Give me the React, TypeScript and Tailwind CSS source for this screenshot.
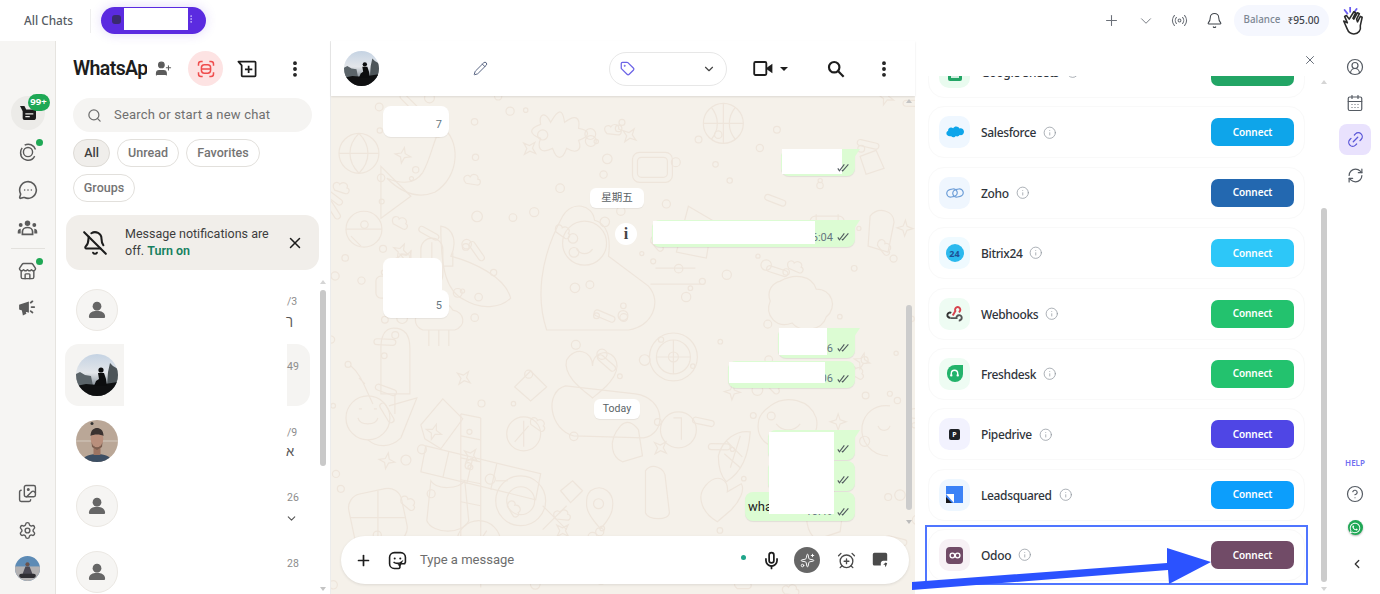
import React from "react";
import { Plus, ChevronDown, ChevronLeft, Radio, Bell, BellOff, X, Search, EllipsisVertical, Pencil, Tag, Mic, CircleUserRound, CalendarDays, Link2, RefreshCw, CircleHelp, Info, Settings, Images, Store, MessageCircleMore, UserPlus, Sparkles, AlarmClockPlus } from "lucide-react";
import { FaWhatsapp } from "react-icons/fa";

const Person = () => (
  <svg viewBox="0 0 42 42" className="w-[42px] h-[42px] rounded-full border border-[#ebe8e3] bg-[#f6f5f3] shrink-0">
    <circle cx="21" cy="17" r="4.6" fill="#666" />
    <path d="M12.5 28c0-4 4-6.2 8.5-6.2s8.500 2.200 8.500 6.200c0 1-.7 1.500-1.600 1.500H14.100c-.9 0-1.600-.5-1.600-1.500z" fill="#666" />
  </svg>
);

const Lake = ({ s, id }: { s: string; id: string }) => (
  <svg viewBox="0 0 42 42" className={s + " rounded-full shrink-0"}>
    <defs>
      <linearGradient id={id} x1="0" x2="0" y1="0" y2="1">
        <stop offset="0" stopColor="#c5d3e3" />
        <stop offset="0.45" stopColor="#e3e6ea" />
        <stop offset="0.7" stopColor="#9aa3aa" />
        <stop offset="1" stopColor="#6b7278" />
      </linearGradient>
    </defs>
    <rect width="42" height="42" fill={`url(#${id})`} />
    <path d="M0 20l4-2 5 3 6 1 2 10H0z" fill="#5b6469" />
    <path d="M34 9l3 3 5 3v17h-11l1-14z" fill="#4d5559" />
    <path d="M0 32l10-2 12 1 20-3v14H0z" fill="#0f1011" />
    <circle cx="25" cy="16" r="2.600" fill="#0c0d0e" />
    <path d="M22 19h6l2 6 1 7H18l2-5 3-2z" fill="#0c0d0e" />
  </svg>
);

const Man = () => (
  <svg viewBox="0 0 42 42" className="w-[42px] h-[42px] rounded-full shrink-0">
    <rect width="42" height="42" fill="#baa797" />
    <path d="M0 21h42" stroke="#dcd3ca" strokeWidth="0.800" />
    <path d="M6 42c1-6 8-8 15-8s14 2 15 8z" fill="#3d4f64" />
    <rect x="17.500" y="26" width="7" height="9" fill="#9c7462" />
    <ellipse cx="21" cy="19" rx="6.300" ry="8.500" fill="#b98f7c" />
    <path d="M14.500 16c0-6 3.500-8 6.500-8s6.500 2 6.500 8c-3-2-10-2-13 0z" fill="#3a3230" />
    <path d="M15.500 22c1.500 7 9.500 7 11 0l-.5 5-5 3-5-3z" fill="#7d5f50" />
    <circle cx="16" cy="3.500" r="1.500" fill="#333" />
  </svg>
);

const Rider = () => (
  <svg viewBox="0 0 24 24" className="w-[25px] h-[25px] rounded-full">
    <rect width="24" height="24" fill="#5d8bb5" />
    <rect y="10" width="24" height="14" fill="#b3b1b2" />
    <path d="M7 18l3-8h4l3 8z" fill="#4a4853" />
    <circle cx="12" cy="8" r="2" fill="#6b534c" />
    <rect x="4" y="17" width="16" height="4" rx="2" fill="#2f2e33" />
  </svg>
);

const Checks = () => (
  <svg viewBox="0 0 16 11" className="w-[13px] h-[10px]" fill="none" stroke="#525c60" strokeWidth="1.400">
    <path d="M1 6l2 3 6-8M6 8l1 1 7-8" />
  </svg>
);

const Doodles = () => {
  const dots: React.ReactNode[] = [];
  let seed = 7;
  const rnd = () => {
    seed = (seed * 9301 + 49297) % 233280;
    return seed / 233280;
  };
  for (let i = 0; i < 150; i++) {
    dots.push(<circle key={i} cx={rnd() * 590} cy={rnd() * 500} r={2 + rnd() * 3.5} />);
  }
  const stars: React.ReactNode[] = [];
  for (let i = 0; i < 60; i++) {
    const x = rnd() * 585;
    const y = rnd() * 498;
    const kind = i % 3;
    stars.push(
      <path
        key={i}
        transform={`translate(${x.toFixed(0)} ${y.toFixed(0)}) rotate(${(rnd() * 60).toFixed(0)})`}
        d={kind === 0 ? "M0-8L2-2 8 0 2 2 0 8-2 2-8 0-2-2z" : kind === 1 ? "M-8 3c-3-5 3-8 5-5 2-5 9-3 8 1 4 0 4 6 0 6H-6z" : "M-8-3h16a3 3 0 0 1 0 6H-8a3 3 0 0 1 0-6z"}
      />
    );
  }
  return (
    <svg className="absolute inset-0 w-full h-full" viewBox="0 0 585 498" fill="none" stroke="#eee5db" strokeWidth="1.200">
      {dots}
      {stars}
      <g>
        <circle cx="28" cy="57" r="20" /><path d="M8 57h40M28 37c-12 12-12 28 0 40M28 37c12 12 12 28 0 40" />
        <path d="M220 26c8-14 12-14 14 0 10-8 16-6 14 6 12 2 12 8 0 12 4 10-2 14-12 8-4 12-10 12-14 0-12 6-16 0-12-10-12-4-12-10 0-14-2-10 4-14 10-2z" />
        <circle cx="393" cy="27" r="20" /><path d="M393 7v40M373 27h40M381 11c8 10 8 22 0 32M405 11c-8 10-8 22 0 32" />
        <path d="M110 30c20 12 20 50-6 66-20 8-36-2-48-14 14 6 28 6 36-6 8-14 10-30 18-46z" />
        <rect x="302" y="56" width="40" height="30" rx="7" /><rect x="307" y="61" width="30" height="20" rx="4" />
        <path d="M50 70l30 30-30 22z" />
        <path d="M232 120c10-16 30-12 32 4 14 4 16 20 14 36l40 30c14 16 4 40-20 44H216c-10-30-8-70 16-114z" />
        <circle cx="254" cy="147" r="22" /><path d="M246 153c4 6 12 6 16 0" />
        <path d="M110 130c14 2 16 18 10 30 22 6 54 20 60 42-10 10-30 12-46 2-18-8-24-30-24-74z" />
        <rect x="90" y="142" width="22" height="48" rx="11" /><path d="M101 146v40M90 166H80v-12M112 170h10v-14" />
        <circle cx="33" cy="133" r="18" /><path d="M15 133h36" />
        <path d="M358 110l24 14 -6 38 -30-6z" /><circle cx="370" cy="135" r="9" />
        <path d="M325 172h40M320 188h50" />
        <rect x="45" y="180" width="40" height="22" rx="5" />
        <path d="M92 214c10-14 24-10 30 0 12 2 14 16 2 20H92c-10-4-10-16 0-20z" /><path d="M98 234v16M108 234v16M118 234v16" />
        <path d="M450 185c14-8 32-6 36 8 16 0 22 18 10 28-4 14-26 16-34 6-16 6-28-8-22-22-4-10 2-18 10-20z" />
        <rect x="480" y="120" width="34" height="26" rx="5" /><path d="M486 118v6M508 118v6" />
      </g>
      <g>
        <path d="M63 232c14 0 16 12 16 20v46H50v-46c0-8 2-20 13-20zM64 298v20" />
        <path d="M28 282l6 6M20 270c10 8 14 22 22 38" />
        <path d="M200 275l16 16-16 14-16-14z" />
        <path d="M236 264c8-14 26-10 26 6 0-16 20-18 24-4 4 14-14 28-24 36-10-8-30-22-26-38z" />
        <path d="M235 290l70 8c30 4 32 40 8 44l-70-2c-24-6-30-44-8-50z" />
        <circle cx="343" cy="261" r="24" /><circle cx="343" cy="261" r="17" /><circle cx="343" cy="261" r="5" /><path d="M343 244v34M326 261h34" />
        <circle cx="37" cy="322" r="22" /><path d="M27 322c2 8 18 8 20 0M28 313h3M43 313h3" /><path d="M58 310l28-8-16 40c-10 10-24 10-33 2" />
        <path d="M130 318v170M150 322v170" /><path d="M130 318l20 4M130 340l20 4M130 362l20 4M130 384l20 4M130 406l20 4" />
        <path d="M95 350l115 28-5 26-115-28zM118 356l-6 26M142 362l-6 26M166 368l-6 26" />
        <path d="M112 303l20 20-22 30-16-10-4-14z" />
        <circle cx="193" cy="338" r="17" /><path d="M193 325v26M184 346l14-16" />
        <path d="M290 330c6-6 12-4 18 4l4 26-20 6c-10-4-16-20-2-36z" />
        <circle cx="348" cy="334" r="18" /><path d="M343 322h8v22" />
        <path d="M388 360c4-16 18-26 32-24-2 24-8 40-24 50-6-6-8-14-8-26z" /><path d="M396 345l16 16M394 358l16 14M410 340l-10 32" />
        <path d="M440 310c16-12 40-6 46 12 4 16-10 32-28 32s-32-10-30-26c0-8 6-14 12-18z" /><path d="M446 328c6 8 18 8 24 0" />
        <path d="M560 310c-16-2-26 8-28 20-2 16 10 30 26 30" /><path d="M548 330c2 6 10 6 12 0" />
        <rect x="20" y="395" width="54" height="54" rx="14" transform="rotate(-12 47 422)" /><path d="M47 395v54M20 422h54" />
        <path d="M100 385c6 10 28 8 34 0l4 40c-6 14-36 14-42 0z" />
        <circle cx="190" cy="405" r="25" /><circle cx="190" cy="405" r="14" /><path d="M165 385h12" />
        <circle cx="148" cy="447" r="22" /><path d="M148 447l8-12" />
        <path d="M260 395c12-8 24 2 22 16 0 10-12 22-12 22s-14-14-14-24c0-6 0-10 4-14z" /><circle cx="268" cy="408" r="5" />
        <path d="M315 375c6-8 20-4 20 8l4 34c0 8-22 8-24 0z" />
        <path d="M375 390c12-14 24-6 22 6l14-8c4 6-2 18-10 26l-14 12c-14-8-22-24-12-36z" />
        <path d="M230 395l12-10 10 10-12 12zM212 410l24 24M236 410l-24 24" />
        <path d="M480 410l24-14 10 10-4 30-24 8c-10-8-12-24-6-34z" />
        <path d="M20 140l10 10M530 60l16-6 8 18-18 6zM540 120c8-10 24-6 24 6l-6 30-20-6z" />
      </g>
    </svg>
  );
};

function Bubble({ mt, w, h, tail, children }: { mt: number; w: number; h: number; tail?: boolean; children?: React.ReactNode }) {
  return (
    <div style={{ marginTop: mt, width: w, height: h }} className={"relative self-end bg-[#dcfcd3] shadow-[0_1px_1px_rgba(0,0,0,0.08)] " + (tail ? "rounded-b-lg rounded-tl-lg" : "rounded-lg")}>
      {tail && <div className="absolute -right-[5px] top-0 w-0 h-0 border-t-[9px] border-t-[#dcfcd3] border-r-[6px] border-r-transparent" />}
      {children}
    </div>
  );
}

const Time = ({ t }: { t: string }) => (
  <div className="absolute right-[5px] bottom-[4px] flex items-center gap-[4px] text-[11px] leading-none text-[#667781]">
    {t}
    <Checks />
  </div>
);

const Chip = ({ t, mt, w }: { t: string; mt: number; w: number }) => (
  <div style={{ marginTop: mt, width: w }} className="self-center h-[20px] -translate-x-[2px] rounded-md bg-white flex items-center justify-center text-[10.500px] text-[#5a6266] shadow-[0_1px_1px_rgba(0,0,0,0.06)] [font-family:Roboto,'Noto_Sans_CJK_SC',sans-serif]">
    {t}
  </div>
);

const rows = [
  { av: <Person />, t: "/3", sub: "ך" },
  { av: <Lake id="sky1" s="w-[42px] h-[42px]" />, t: "49", sub: "", sel: true },
  { av: <Man />, t: "/9", sub: "א" },
  { av: <Person />, t: "26", sub: "", chev: true },
  { av: <Person />, t: "28", sub: "" },
];

const Logo = ({ name }: { name: string }) => {
  if (name === "Google Sheets")
    return <div className="w-[14px] h-[18px] rounded-[2px] bg-[#23a566] flex items-end justify-center pb-[3px]"><div className="w-[8px] h-[6px] bg-white/80" /></div>;
  if (name === "Salesforce")
    return (
      <svg viewBox="0 0 24 16" className="w-[18px] h-[12px]"><path d="M9.500 3c1-1.500 2.500-2.300 4-2.300 2 0 3.500 1 4.300 2.500 3.600-1 6.200 1.700 6.200 4.500s-2.600 5.400-5.800 4.400c-1 1.700-3.500 2.300-5.200 1.200-1.200 2-4.500 2.300-6 .2C3 14.200.5 12.400.5 9.800c0-1.800 1-3 2.300-3.600C2.300 3 6.500.5 9.500 3z" fill="#0ea5ea" /></svg>
    );
  if (name === "Zoho")
    return (
      <svg viewBox="0 0 24 16" className="w-[18px] h-[12px]" fill="none" stroke="#6f9fd8" strokeWidth="1.600"><rect x="1" y="3" width="14" height="10" rx="5" transform="rotate(-12 8 8)" /><rect x="9" y="3" width="14" height="10" rx="5" transform="rotate(-12 16 8)" /></svg>
    );
  if (name === "Bitrix24")
    return <div className="w-[18px] h-[18px] rounded-full bg-[#2bb9ee] flex items-center justify-center text-[9px] font-bold text-[#1d4f95] leading-none">24</div>;
  if (name === "Webhooks")
    return (
      <svg viewBox="0 0 24 24" className="w-[18px] h-[18px]" fill="none" strokeWidth="2.600"><path d="M9 14l3.500-6a3.500 3.500 0 1 1 4.500 1.500" stroke="#d8434e" /><path d="M6 17a3.500 3.500 0 1 1 1-6.500" stroke="#333" /><path d="M6 17.500h8a3.500 3.500 0 1 1 3 3" stroke="#555" /></svg>
    );
  if (name === "Freshdesk")
    return (
      <div className="w-[16px] h-[17px] rounded-full rounded-tr-[3px] bg-[#23b36b] flex items-center justify-center">
        <svg viewBox="0 0 12 12" className="w-[11px] h-[11px]" fill="none" stroke="#fff" strokeWidth="1.500"><path d="M2.500 9V6a3.500 3.500 0 0 1 7 0v3" /><path d="M2.500 7v2M9.500 7v2" strokeWidth="2.400" /></svg>
      </div>
    );
  if (name === "Pipedrive")
    return <div className="w-[11px] h-[11px] rounded-[2px] bg-[#1f2227] flex items-center justify-center text-[7px] font-bold text-white leading-none">P</div>;
  if (name === "Leadsquared")
    return (
      <svg viewBox="0 0 17 17" className="w-[17px] h-[17px]"><rect width="17" height="17" fill="#3b82f6" /><path d="M0 8h8v9z" fill="#fff" /><path d="M0 11l6 6H0z" fill="#1a1a1a" /></svg>
    );
  return (
    <div className="w-[17px] h-[17px] rounded-[4px] bg-[#714b67] flex items-center justify-center">
      <svg viewBox="0 0 14 8" className="w-[12px] h-[7px]" fill="none" stroke="#fff" strokeWidth="1.600"><circle cx="4" cy="4" r="2.700" /><circle cx="10" cy="4" r="2.700" /></svg>
    </div>
  );
};

const integrations = [
  { name: "Google Sheets", c: "bg-[#22a565]", i: "bg-[#e9fbef]" },
  { name: "Salesforce", c: "bg-[#0ea5ea]", i: "bg-[#eff7ff]" },
  { name: "Zoho", c: "bg-[#2368b0]", i: "bg-[#eff6fe]" },
  { name: "Bitrix24", c: "bg-[#2dc7f8]", i: "bg-[#effaff]" },
  { name: "Webhooks", c: "bg-[#23c26e]", i: "bg-[#eefcf3]" },
  { name: "Freshdesk", c: "bg-[#23c26e]", i: "bg-[#eefcf3]" },
  { name: "Pipedrive", c: "bg-[#4f46e5]", i: "bg-[#f2f2fe]" },
  { name: "Leadsquared", c: "bg-[#0c9efc]", i: "bg-[#eef7ff]" },
  { name: "Odoo", c: "bg-[#714b67]", i: "bg-[#f7f1f5]" },
];

export default function App() {
  return (
    <div className="relative w-[1380px] h-[594px] overflow-hidden bg-white flex flex-col [font-family:'Noto_Sans',sans-serif]">
      <header className="h-[41px] shrink-0 flex items-center pl-[24px] pr-[16px]">
        <span className="w-[52px] text-[11.800px] font-medium text-[#555b63]">All Chats</span>
        <div className="w-px h-[24px] bg-[#eeeeee] ml-[14px]" />
        <div className="relative ml-[10px] w-[105px] h-[27px] rounded-full bg-[#5b2be0] shadow-[0_0_12px_rgba(91,43,224,0.18)]">
          <div className="absolute left-[11px] top-[8px] w-[9px] h-[9px] rounded-[3px] bg-[#3a2a70]" />
          <div className="absolute left-[23px] top-[1px] w-[64px] h-[22px] bg-white" />
          <EllipsisVertical className="absolute right-[10px] top-[7px] w-[10px] h-[10px] text-[#c9b8ff]" />
        </div>
        <div className="ml-auto flex items-center">
          <Plus className="w-[17px] h-[17px] text-[#6b7078]" strokeWidth={1.500} />
          <ChevronDown className="ml-[17px] w-[18px] h-[18px] text-[#6b7078]" strokeWidth={1.200} />
          <Radio className="ml-[16px] w-[17px] h-[17px] text-[#6b7078]" strokeWidth={1.500} />
          <Bell className="ml-[18px] w-[17px] h-[17px] text-[#3f444b]" strokeWidth={1.500} />
          <div className="ml-[11px] w-[95px] h-[31px] rounded-full bg-[#f5f7fe] flex items-center justify-center gap-[7px]">
            <span className="text-[9.800px] font-medium text-[#7d8794]">Balance</span>
            <span className="text-[10.200px] font-medium text-[#3f444b]">₹95.00</span>
          </div>
          <svg viewBox="0 0 26 30" className="ml-[11px] w-[24px] h-[28px]" fill="none" strokeLinecap="round" strokeLinejoin="round">
            <path d="M5 3l3 4M11 0v5M18 2l-3 4" stroke="#6a5cf0" strokeWidth="1.900" />
            <path d="M4 15l4 9c1 3 3 5 7 5 5 0 8-4 7-9l2-9-2-1-3 6-1-3 3-6-2-1-4 7-1-1 3-6-2-1-5 8-3-4-2 1 3 7z" fill="#fff" stroke="#2a2a2a" strokeWidth="1.700" />
          </svg>
        </div>
      </header>

      <main className="flex-1 min-h-0 flex">
        <nav className="w-[56px] shrink-0 bg-[#f6f5f3] border-r border-[#e6e4e0] flex flex-col items-center text-[#5b5b5b]">
          <div className="relative mt-[55px] w-[34px] h-[34px] rounded-full bg-[#ecebe8] flex items-center justify-center">
            <svg viewBox="0 0 20 18" className="w-[18px] h-[16px]" fill="#1c1c1c"><path d="M1 1h5l2 4h11v9a3 3 0 0 1-3 3H6a2 2 0 0 1-2-2V7z" /><path d="M7 10h9M7 13h5" stroke="#ecebe8" strokeWidth="1.500" /></svg>
            <span className="absolute -top-[2px] left-[17px] w-[22px] h-[17px] rounded-full bg-[#1fa855] text-white text-[9.500px] font-bold flex items-center justify-center">99+</span>
          </div>
          <div className="relative mt-[10px] w-[24px] h-[24px] flex items-center justify-center">
            <svg viewBox="0 0 24 24" className="w-[20px] h-[20px]" fill="none" stroke="#5b5b5b" strokeWidth="1.700"><circle cx="12" cy="12" r="5.500" /><path d="M5 7a9 9 0 0 0-1 9M8 3.800A9 9 0 0 1 21 9M3 13a9 9 0 0 0 17 4" /></svg>
            <span className="absolute -right-[3px] top-[-1px] w-[7px] h-[7px] rounded-full bg-[#1fa855]" />
          </div>
          <MessageCircleMore className="mt-[16px] w-[20px] h-[20px]" strokeWidth={1.900} />
          <svg viewBox="0 0 24 20" className="mt-[19px] w-[21px] h-[17px]" fill="#5b5b5b"><circle cx="12" cy="5" r="3.200" /><circle cx="4" cy="7" r="2.300" /><circle cx="20" cy="7" r="2.300" /><path d="M6 18v-3c0-3 3-5 6-5s6 2 6 5v3z" fill="none" stroke="#5b5b5b" strokeWidth="2" /><path d="M0.500 17v-2c0-2 1.500-3.500 3.500-3.500v5.500zM23.500 17v-2c0-2-1.500-3.500-3.500-3.500v5.500z" /></svg>
          <div className="mt-[12px] w-[34px] h-px bg-[#e3e1dd]" />
          <div className="relative mt-[12px] w-[24px] h-[20px] flex items-center justify-center">
            <Store className="w-[19px] h-[19px]" strokeWidth={1.800} />
            <span className="absolute -right-[3px] -top-[3px] w-[7px] h-[7px] rounded-full bg-[#1fa855]" />
          </div>
          <svg viewBox="0 0 22 18" className="mt-[19px] w-[20px] h-[16px]" fill="none" stroke="#5b5b5b" strokeWidth="2"><path d="M2 6l9-3v10l-9-3zM5 11l1 5 2-1-1-3" fill="#5b5b5b" /><path d="M14 3l2-1.500M15 8h3M14 12.500l2 1.500" strokeLinecap="round" /></svg>
          <Images className="mt-auto w-[19px] h-[19px]" strokeWidth={1.800} />
          <Settings className="mt-[18px] w-[19px] h-[19px]" strokeWidth={1.800} />
          <div className="mt-[16px] mb-[13.500px] h-[25px]"><Rider /></div>
        </nav>

        <section className="relative w-[274px] shrink-0 overflow-hidden [font-family:Roboto,sans-serif]">
          <div className="mt-[10px] h-[35px] pl-[17px] flex items-center">
            <span className="w-[74px] overflow-hidden whitespace-nowrap text-[19.500px] font-semibold tracking-[-0.600px] text-[#1d1d1d]">WhatsApp</span>
            <UserPlus className="ml-[8px] w-[17px] h-[17px] text-[#5b5b5b] fill-[#5b5b5b]" strokeWidth={1.500} />
            <div className="ml-[16px] w-[35px] h-[35px] rounded-full bg-[#fde3e3] flex items-center justify-center">
              <svg viewBox="0 0 24 24" className="w-[20px] h-[20px]" fill="none" stroke="#ef4d4d" strokeWidth="1.800"><path d="M3 8V6a3 3 0 0 1 3-3h2M16 3h2a3 3 0 0 1 3 3v2M21 16v2a3 3 0 0 1-3 3h-2M8 21H6a3 3 0 0 1-3-3v-2" /><rect x="6.500" y="7" width="11" height="10" rx="3.500" /><path d="M6.500 12h11" /></svg>
            </div>
            <svg viewBox="0 0 24 22" className="ml-[14px] w-[20px] h-[18px]" fill="none" stroke="#1d1d1d" strokeWidth="2.100" strokeLinejoin="round"><path d="M1.500 2h20a1 1 0 0 1 1 1v16a1 1 0 0 1-1 1H6.500a1 1 0 0 1-1-1V6.500z" /><path d="M14 7v9M9.500 11.500h9" /></svg>
            <EllipsisVertical className="ml-[28px] w-[20px] h-[20px] text-[#1d1d1d]" strokeWidth={2.600} />
          </div>
          <div className="mt-[12px] ml-[17px] w-[239px] h-[34px] rounded-full bg-[#f5f4f2] flex items-center pl-[14px]">
            <Search className="w-[15px] h-[15px] text-[#6e6e6e]" />
            <span className="ml-[12px] text-[13px] text-[#6f6f6f] tracking-[0.2px]">Search or start a new chat</span>
          </div>
          <div className="mt-[7px] ml-[17px] w-[239px] flex flex-wrap gap-x-[7px] gap-y-[7px]">
            <span className="h-[28px] w-[37px] rounded-full border border-[#dedbd6] bg-[#f0eeeb] flex items-center justify-center text-[12.500px] font-medium text-[#3f3f3f]">All</span>
            <span className="h-[28px] w-[62px] rounded-full border border-[#e2e0dc] flex items-center justify-center text-[12.500px] font-medium text-[#747474]">Unread</span>
            <span className="h-[28px] w-[74px] rounded-full border border-[#e2e0dc] flex items-center justify-center text-[12.500px] font-medium text-[#747474]">Favorites</span>
            <span className="h-[28px] w-[62px] rounded-full border border-[#e2e0dc] flex items-center justify-center text-[12.500px] font-medium text-[#747474]">Groups</span>
          </div>
          <div className="mt-[13px] ml-[10px] w-[253px] h-[55px] rounded-[14px] bg-[#f1eeea] flex items-center pl-[16px]">
            <BellOff className="w-[26px] h-[26px] text-[#1d1d1d]" strokeWidth={1.900} />
            <div className="ml-[17px] w-[150px] -translate-y-[1px] text-[12.500px] leading-[17px] text-[#3d3d3d]">
              Message notifications are off. <span className="font-semibold text-[#15805f]">Turn on</span>
            </div>
            <X className="ml-[11px] w-[18px] h-[18px] text-[#1d1d1d]" strokeWidth={2} />
          </div>
          <div className="mt-[9px] ml-[9px] w-[245px] flex flex-col gap-[3.400px]">
            {rows.map((r, i) => (
              <div key={i} className={"relative h-[62px] shrink-0 rounded-[14px] flex items-center pl-[11px] " + (r.sel ? "bg-[#f5f4f2]" : "")}>
                {r.av}
                {r.sel && <div className="absolute left-[59px] top-0 w-[163px] h-full bg-white" />}
                <div className="absolute left-[222px] top-[17px] text-[10.500px] leading-[12px] text-[#8c8c8c]">{r.t}</div>
                {r.sub && <div className="absolute left-[221px] top-[35px] text-[13px] leading-[14px] text-[#555]">{r.sub}</div>}
                {r.chev && <ChevronDown className="absolute left-[220px] top-[37px] w-[13px] h-[13px] text-[#555]" strokeWidth={2} />}
              </div>
            ))}
          </div>
          <div className="absolute left-[264px] top-[249px] w-[6px] h-[176px] rounded-full bg-[#c9c9c9]" />
          <div className="absolute left-[264px] top-[239px] w-0 h-0 border-x-[3px] border-x-transparent border-b-[4px] border-b-[#d5d5d5]" />
          <div className="absolute left-[264px] bottom-[3px] w-0 h-0 border-x-[3px] border-x-transparent border-t-[4px] border-t-[#c4c4c4]" />
        </section>

        <section className="w-[585px] shrink-0 flex flex-col border-l border-[#ececec]">
          <div className="h-[55px] shrink-0 flex items-center pl-[13px] shadow-[0_1px_2px_rgba(0,0,0,0.1)] relative z-10 bg-white">
            <Lake id="sky2" s="w-[35px] h-[35px]" />
            <Pencil className="ml-[94px] w-[15px] h-[15px] text-[#4d5a7a]" strokeWidth={1.500} />
            <div className="ml-[121px] w-[118px] h-[34px] rounded-full border border-[#e7e7e7] flex items-center pl-[10px]">
              <Tag className="w-[15px] h-[15px] text-[#6b63e6]" strokeWidth={2} />
              <ChevronDown className="ml-[67px] w-[14px] h-[14px] text-[#444]" />
            </div>
            <svg viewBox="0 0 26 20" className="ml-[26px] w-[21px] h-[17px]" fill="none" stroke="#1d1d1d" strokeWidth="2.300"><rect x="1.500" y="2" width="15" height="16" rx="1.500" /><path d="M17 9l7-5v12l-7-5z" fill="#1d1d1d" stroke="none" /></svg>
            <div className="ml-[6px] w-0 h-0 border-x-[4px] border-x-transparent border-t-[4px] border-t-[#1d1d1d]" />
            <svg viewBox="0 0 20 20" className="ml-[39px] w-[18px] h-[18px]" fill="none" stroke="#1d1d1d" strokeWidth="2.400"><circle cx="8" cy="8" r="5.800" /><path d="M12.500 12.500l6 6" /></svg>
            <EllipsisVertical className="ml-[29px] w-[20px] h-[20px] text-[#1d1d1d]" strokeWidth={2.600} />
          </div>
          <div className="relative flex-1 min-h-0 overflow-hidden bg-[#f5f1ea] [font-family:Roboto,sans-serif]">
            <Doodles />
            <div className="relative flex flex-col pl-[52px] pr-[60px] pt-[10px] h-[425px]">
              <div className="relative w-[66px] h-[31px] rounded-lg bg-white shadow-[0_1px_1px_rgba(0,0,0,0.06)] text-[11px] text-[#667781]">
                <span className="absolute right-[7px] bottom-[3px]">7</span>
              </div>
              <Bubble mt={12} w={74} h={27} tail>
                <div className="absolute left-[1px] top-0 w-[60px] h-[25px] bg-white" />
                <div className="absolute right-[5px] bottom-[3px]"><Checks /></div>
              </Bubble>
              <Chip t="星期五" mt={12} w={54} />
              <Bubble mt={12} w={203} h={27} tail>
                <Time t="16:04" />
                <div className="absolute left-[1px] top-[1px] w-[162px] h-[23px] bg-white" />
                <div className="absolute -left-[37px] top-[3px] w-[22px] h-[22px] rounded-full bg-white flex items-center justify-center text-[16px] font-bold text-[#444] [font-family:'Liberation_Serif',serif]">i</div>
              </Bubble>
              <div className="mt-[11px] h-[60px] w-[66px] relative text-[11px] text-[#667781]">
                <div className="w-[59px] h-[32px] bg-white rounded-t-lg" />
                <div className="w-[66px] h-[28px] bg-white rounded-b-lg rounded-tr-lg shadow-[0_1px_1px_rgba(0,0,0,0.06)]" />
                <span className="absolute right-[7px] bottom-[3px]">5</span>
              </div>
              <Bubble mt={10} w={77} h={30} tail>
                <Time t="16:06" />
                <div className="absolute left-[1px] top-0 w-[48px] h-[27px] bg-white" />
              </Bubble>
              <Bubble mt={3} w={127} h={28}>
                <Time t="16:06" />
                <div className="absolute left-[1px] top-[1px] w-[96px] h-[21px] bg-white" />
              </Bubble>
              <Chip t="Today" mt={11} w={46} />
              <Bubble mt={11} w={87} h={30} tail><div className="absolute right-[5px] bottom-[6px]"><Checks /></div></Bubble>
              <Bubble mt={1} w={87} h={30}><div className="absolute right-[5px] bottom-[6px]"><Checks /></div></Bubble>
              <Bubble mt={1} w={110} h={29}>
                <span className="absolute left-[3px] top-[5px] text-[13px] text-[#222]">what</span>
                <Time t="10:49" />
                <div className="absolute left-[24px] -top-[60px] w-[65px] h-[82px] bg-white" />
              </Bubble>
            </div>
            <div className="relative mt-[15px] ml-[10px] w-[568px] h-[48px] rounded-[24px] bg-white shadow-[0_1px_3px_rgba(0,0,0,0.1)] flex items-center pl-[14px] text-[#1d1d1d]">
              <Plus className="w-[17px] h-[17px]" strokeWidth={2.400} />
              <svg viewBox="0 0 24 24" className="ml-[16px] w-[19px] h-[19px]" fill="none" stroke="#1d1d1d" strokeWidth="2"><path d="M8 2h8a6 6 0 0 1 6 6v6l-1 2h-4c-1 0-2 1-2 2v3a2 2 0 0 1-2 1H8a6 6 0 0 1-6-6V8a6 6 0 0 1 6-6z" /><circle cx="8.500" cy="9.500" r="1.300" fill="#1d1d1d" stroke="none" /><circle cx="15.500" cy="9.500" r="1.300" fill="#1d1d1d" stroke="none" /><path d="M7 14c3 2 7 2 10 0l-2 4-2-1" /></svg>
              <span className="ml-[13px] text-[13px] text-[#6d6d6d]">Type a message</span>
              <span className="ml-auto w-[5px] h-[5px] rounded-full bg-[#1fa58a] -translate-y-[3px]" />
              <Mic className="ml-[16px] w-[19px] h-[19px]" strokeWidth={2.200} />
              <div className="ml-[13.500px] w-[26px] h-[26px] rounded-full bg-[#666] flex items-center justify-center">
                <Sparkles className="w-[15px] h-[15px] text-white" strokeWidth={1.500} />
              </div>
              <AlarmClockPlus className="ml-[16.500px] w-[19px] h-[19px] text-[#4a4a4a]" strokeWidth={1.700} />
              <svg viewBox="0 0 20 20" className="ml-[16.500px] mr-[21px] w-[16px] h-[16px]" fill="#4a4a4a"><path d="M3 1h14a2 2 0 0 1 2 2v8h-5c-2 0-3 2-3 3v3H3a2 2 0 0 1-2-2V3a2 2 0 0 1 2-2z" /><path d="M17 13l2 1-2 5-1-3h-2z" /></svg>
            </div>
            <div className="absolute right-[3px] top-[209px] w-[6px] h-[205px] rounded-full bg-[#cccccc]" />
            <div className="absolute right-[3px] top-[3px] w-0 h-0 border-x-[3px] border-x-transparent border-b-[4px] border-b-[#c4c4c4]" />
            <div className="absolute right-[3px] top-[424px] w-0 h-0 border-x-[3px] border-x-transparent border-t-[4px] border-t-[#bbbbbb]" />
          </div>
        </section>

        <section className="relative w-[423px] shrink-0 flex flex-col">
          <div className="h-[35px] shrink-0 flex justify-end items-start pr-[21px] pt-[12px]">
            <X className="w-[14px] h-[14px] text-[#5c6470]" strokeWidth={1.600} />
          </div>
          <div className="flex-1 min-h-0 overflow-hidden pl-[13px] w-[396px]">
            <div className="-mt-[30px] flex flex-col gap-[8.400px]">
              {integrations.map((it) => (
                <div key={it.name} className="relative h-[52px] w-[377px] shrink-0 rounded-[16px] border border-[#f9f9f9] flex items-center pl-[10px] pr-[10px]">
                  {it.name === "Odoo" && <div className="absolute -left-[4px] -right-[4px] -top-[5px] -bottom-[5px] border-2 border-[#4f75ff]" />}
                  <div className={"w-[31px] h-[32px] rounded-[10px] flex items-center justify-center shrink-0 " + it.i}>
                    <Logo name={it.name} />
                  </div>
                  <span className="ml-[11px] translate-y-[0.500px] text-[12px] tracking-[-0.350px] font-medium text-[#2f343b]">{it.name}</span>
                  <Info className="ml-[7px] w-[13.500px] h-[13.500px] text-[#8d949c]" strokeWidth={1.300} />
                  <button className={"relative ml-auto w-[83px] h-[28px] rounded-[7px] text-white text-[10px] tracking-[-0.100px] font-semibold " + it.c}>Connect</button>
                </div>
              ))}
            </div>
          </div>
          <div className="absolute left-[406px] top-[167px] w-[6px] h-[374px] rounded-full bg-[#cccccc]" />
          <div className="absolute left-[406px] top-[39px] w-0 h-0 border-x-[3px] border-x-transparent border-b-[4px] border-b-[#d5d5d5]" />
          <div className="absolute left-[406px] top-[546px] w-0 h-0 border-x-[3px] border-x-transparent border-t-[4px] border-t-[#d5d5d5]" />
        </section>

        <aside className="w-[42px] shrink-0 pr-[8px] flex flex-col items-center text-[#555b63]">
          <CircleUserRound className="mt-[17px] w-[18px] h-[18px]" strokeWidth={1.600} />
          <CalendarDays className="mt-[18px] w-[18px] h-[18px]" strokeWidth={1.600} />
          <div className="mt-[12px] w-[32px] h-[31px] rounded-[8px] bg-[#e9e2fd] flex items-center justify-center">
            <Link2 className="w-[19px] h-[19px] text-[#5b57d8] -rotate-45" strokeWidth={1.600} />
          </div>
          <RefreshCw className="mt-[12px] w-[17px] h-[17px]" strokeWidth={1.700} />
          <span className="mt-[274px] text-[8px] font-semibold leading-[10px] text-[#6f6ff0]">HELP</span>
          <CircleHelp className="mt-[17px] w-[18px] h-[18px]" strokeWidth={1.600} />
          <div className="mt-[17px] w-[15px] h-[15px] rounded-full bg-[#1fa855] flex items-center justify-center shadow-[0_1px_2px_rgba(0,0,0,0.3)]">
            <FaWhatsapp className="w-[12px] h-[12px] text-white" />
          </div>
          <ChevronLeft className="mt-[22px] translate-x-[2px] w-[14px] h-[14px] text-[#333]" strokeWidth={2.200} />
        </aside>
      </main>

      <svg className="absolute left-0 top-0 w-[1380px] h-[594px] pointer-events-none" viewBox="0 0 1380 594">
        <path d="M912 582L1167 563L1167 548L1211 562L1169 584L1168 570L912 590z" fill="#2b52ff" />
      </svg>
    </div>
  );
}
